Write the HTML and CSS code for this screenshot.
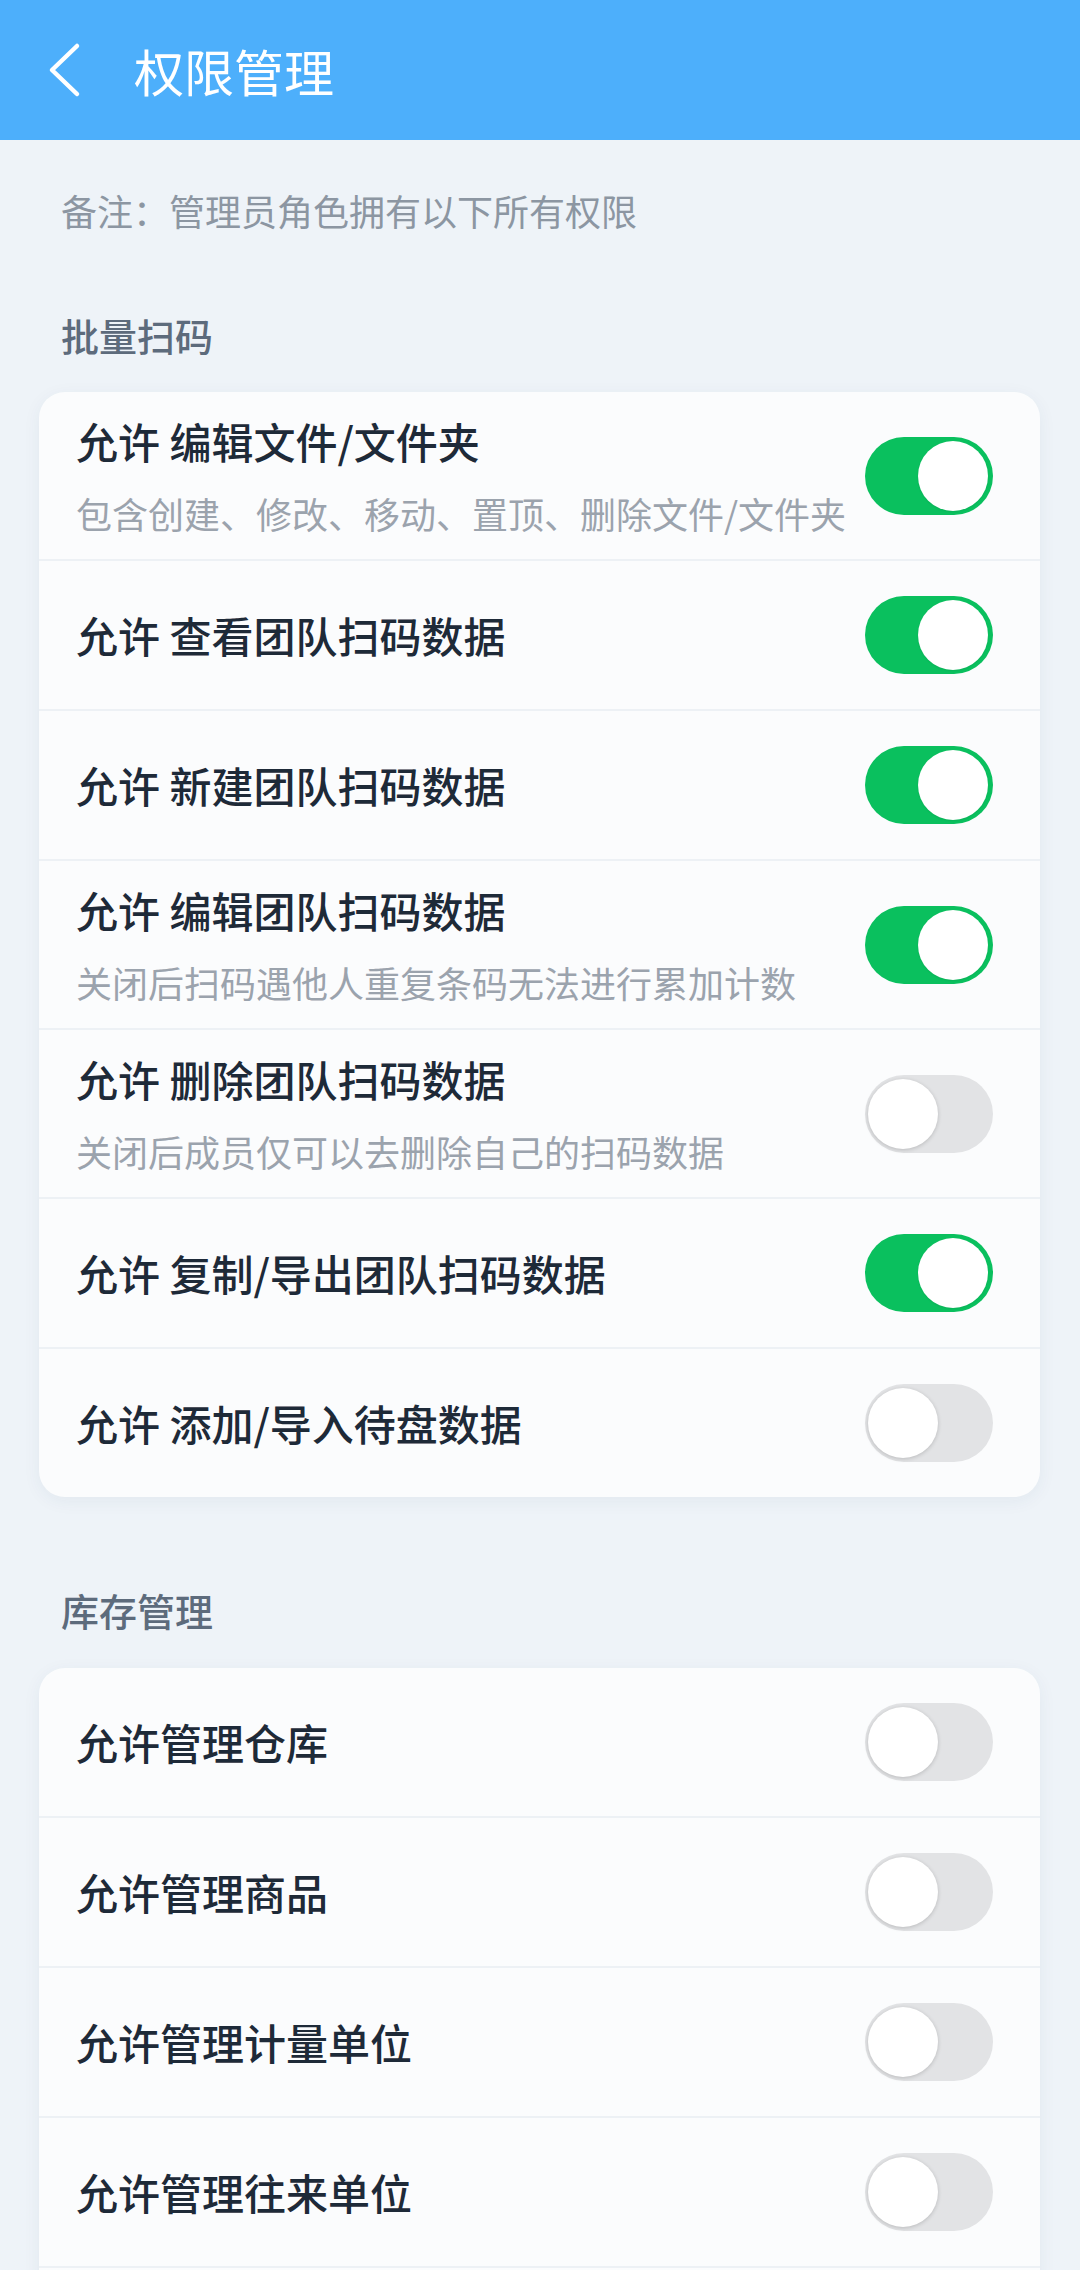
FILE: index.html
```html
<!DOCTYPE html>
<html lang="zh-CN">
<head>
<meta charset="utf-8">
<title>权限管理</title>
<link rel="stylesheet" href="styles.css">
</head>
<body>
<header class="topbar">
  <svg class="back" width="40" height="60" viewBox="0 0 40 60" aria-hidden="true">
    <polyline points="33,6 8,30 33,54" fill="none" stroke="#ffffff" stroke-width="4.5" stroke-linecap="round" stroke-linejoin="round"/>
  </svg>
  <h1 class="title">权限管理</h1>
</header>
<main class="content">
  <p class="note">备注：管理员角色拥有以下所有权限</p>

  <h2 class="section-title first">批量扫码</h2>
  <section class="card">
    <div class="row double">
      <div class="texts">
        <div class="row-title">允许 编辑文件/文件夹</div>
        <div class="row-desc">包含创建、修改、移动、置顶、删除文件/文件夹</div>
      </div>
      <span class="switch on"><span class="knob"></span></span>
    </div>
    <div class="row">
      <div class="texts"><div class="row-title">允许 查看团队扫码数据</div></div>
      <span class="switch on"><span class="knob"></span></span>
    </div>
    <div class="row">
      <div class="texts"><div class="row-title">允许 新建团队扫码数据</div></div>
      <span class="switch on"><span class="knob"></span></span>
    </div>
    <div class="row double">
      <div class="texts">
        <div class="row-title">允许 编辑团队扫码数据</div>
        <div class="row-desc">关闭后扫码遇他人重复条码无法进行累加计数</div>
      </div>
      <span class="switch on"><span class="knob"></span></span>
    </div>
    <div class="row double">
      <div class="texts">
        <div class="row-title">允许 删除团队扫码数据</div>
        <div class="row-desc">关闭后成员仅可以去删除自己的扫码数据</div>
      </div>
      <span class="switch"><span class="knob"></span></span>
    </div>
    <div class="row">
      <div class="texts"><div class="row-title">允许 复制/导出团队扫码数据</div></div>
      <span class="switch on"><span class="knob"></span></span>
    </div>
    <div class="row">
      <div class="texts"><div class="row-title">允许 添加/导入待盘数据</div></div>
      <span class="switch"><span class="knob"></span></span>
    </div>
  </section>

  <h2 class="section-title">库存管理</h2>
  <section class="card">
    <div class="row">
      <div class="texts"><div class="row-title">允许管理仓库</div></div>
      <span class="switch"><span class="knob"></span></span>
    </div>
    <div class="row">
      <div class="texts"><div class="row-title">允许管理商品</div></div>
      <span class="switch"><span class="knob"></span></span>
    </div>
    <div class="row">
      <div class="texts"><div class="row-title">允许管理计量单位</div></div>
      <span class="switch"><span class="knob"></span></span>
    </div>
    <div class="row">
      <div class="texts"><div class="row-title">允许管理往来单位</div></div>
      <span class="switch"><span class="knob"></span></span>
    </div>
    <div class="row peek"></div>
  </section>
</main>
</body>
</html>
```

FILE: styles.css
```css
* {
  box-sizing: border-box;
}

html, body {
  margin: 0;
  padding: 0;
}

body {
  width: 1080px;
  background: #eef3f8;
  font-family: "Noto Sans CJK SC", "Noto Sans", sans-serif;
  color: #1e2a38;
}

.topbar {
  height: 140px;
  background: #4daffb;
  display: flex;
  align-items: center;
  padding-left: 44px;
}

.back {
  display: block;
  flex: none;
}

.title {
  margin: 0 0 0 50px;
  font-size: 50px;
  font-weight: 400;
  line-height: 60px;
  color: #ffffff;
}

.content {
  padding: 0 40px 0 39px;
}

.note {
  margin: 45px 0 0 22px;
  font-size: 36px;
  line-height: 50px;
  color: #8c96a2;
}

.section-title {
  margin: 88px 0 33px 22px;
  font-size: 38px;
  font-weight: 500;
  line-height: 50px;
  color: #5d6b7c;
}

.section-title.first {
  margin-top: 75px;
  margin-bottom: 32px;
}

.card {
  background: #fbfcfd;
  border-radius: 26px;
  box-shadow: 0 4px 18px rgba(30, 60, 100, 0.06);
  overflow: hidden;
}

.row {
  display: flex;
  align-items: center;
  justify-content: space-between;
  padding: 35px 47px 35px 37px;
}

.row + .row {
  border-top: 2px solid #edf1f5;
}

.row.double {
  padding-top: 21px;
  padding-bottom: 21px;
}

.row.peek {
  min-height: 150px;
}

.texts {
  display: flex;
  flex-direction: column;
}

.row-title {
  font-size: 42px;
  font-weight: 500;
  line-height: 56px;
  color: #1e2a38;
  white-space: nowrap;
}

.row-desc {
  margin-top: 19px;
  font-size: 36px;
  line-height: 50px;
  color: #9ba3ad;
  white-space: nowrap;
}

.switch {
  position: relative;
  flex: none;
  width: 128px;
  height: 78px;
  border-radius: 39px;
  background: #e2e3e5;
}

.switch.on {
  background: #0ac05e;
}

.knob {
  position: absolute;
  top: 4px;
  left: 3px;
  width: 70px;
  height: 70px;
  border-radius: 50%;
  background: #ffffff;
  box-shadow: 0 1px 4px rgba(0, 0, 0, 0.18);
}

.switch.on .knob {
  left: auto;
  right: 5px;
  box-shadow: 0 1px 2px rgba(0, 0, 0, 0.08);
}
```
